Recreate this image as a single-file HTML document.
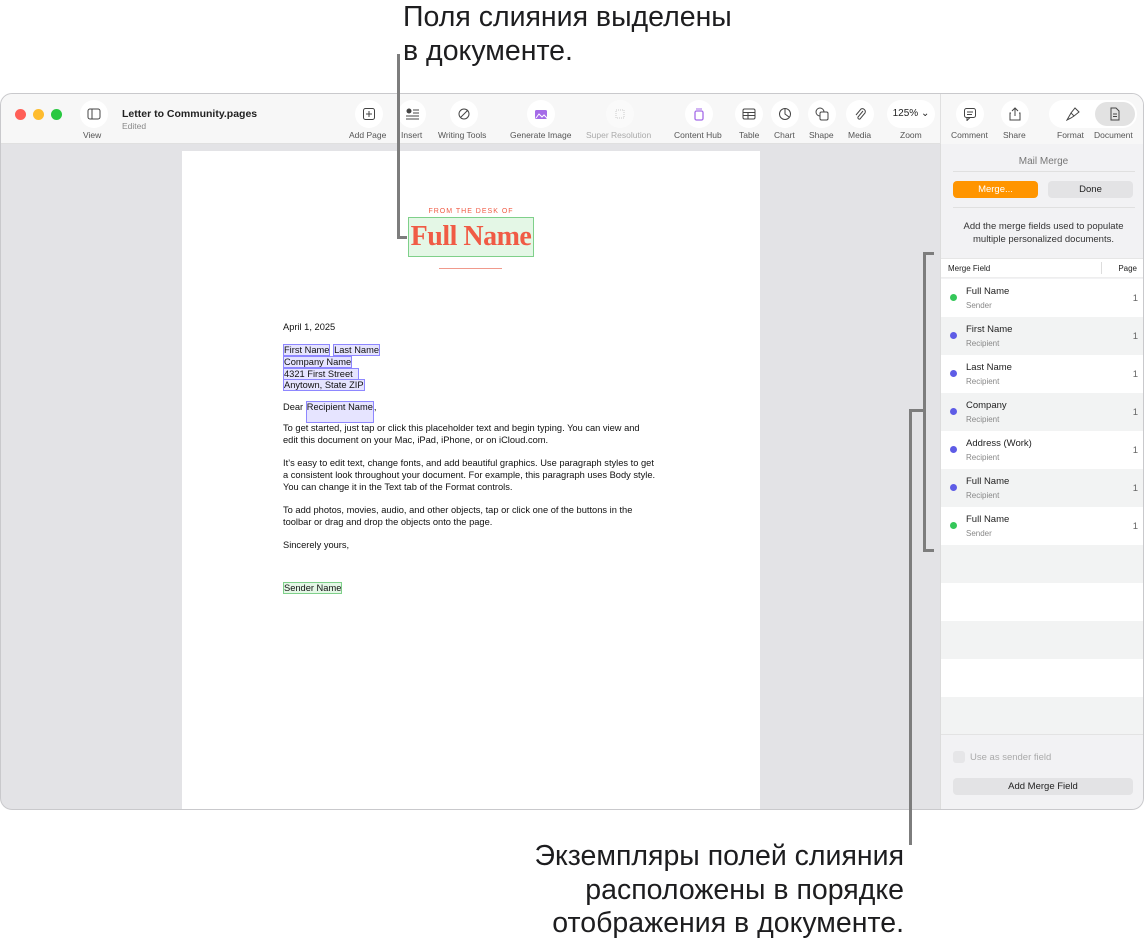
<!DOCTYPE html><html><head><meta charset="utf-8"><style>
*{margin:0;padding:0;box-sizing:border-box}
body{width:1144px;height:950px;background:#fff;font-family:"Liberation Sans",sans-serif;position:relative;overflow:hidden}
.abs{position:absolute}
.call{font-size:28.5px;color:#1d1d1f;line-height:33.5px}
.win{left:0;top:93px;width:1144px;height:717px;border:1px solid #c9c9cc;border-radius:12px;overflow:hidden;background:#e3e3e6}
.tb{left:0;top:0;width:1144px;height:50px;background:#f7f7f7;border-bottom:1px solid #e0e0e0}
.lbl{font-size:8.5px;color:#555;text-align:center;position:absolute;top:36px;white-space:nowrap}
.ic{position:absolute;top:6px;width:28px;height:28px;border-radius:14px;background:#fff}
.ic svg{position:absolute;left:7px;top:7px}
.page{left:181px;top:57px;width:578px;height:660px;background:#fff}
.t{font-size:9.3px;color:#111;line-height:11.8px;position:absolute;white-space:nowrap}
.mf{background:#e6e4ff;border:1px solid #8e87ff}
.side{left:939px;top:50px;width:205px;height:667px;background:#f2f2f4;border-left:1px solid #dcdcdc}
.row{position:absolute;left:0;width:205px;height:38px}
.dot{position:absolute;left:9px;top:15px;width:7px;height:7px;border-radius:4px}
.rn{position:absolute;left:25px;top:7px;font-size:9.5px;color:#222}
.rs{position:absolute;left:25px;top:22px;font-size:8px;color:#888}
.rp{position:absolute;right:8px;top:14px;font-size:9.5px;color:#666}
.ln{position:absolute;background:#7d7d7d}
</style></head><body>
<div class="abs call" style="left:403px;top:1px">Поля слияния выделены<br>в документе.</div>
<div class="abs call" style="right:240px;top:840px;text-align:right">Экземпляры полей слияния<br>расположены в порядке<br>отображения в документе.</div>

<div class="abs win">
 <div class="abs tb">
  <div class="abs" style="left:14px;top:15px;width:11px;height:11px;border-radius:6px;background:#ff5f57"></div>
  <div class="abs" style="left:32px;top:15px;width:11px;height:11px;border-radius:6px;background:#febc2e"></div>
  <div class="abs" style="left:50px;top:15px;width:11px;height:11px;border-radius:6px;background:#28c840"></div>
  <div class="ic" style="left:79px"><svg width="14" height="14"><rect x="1" y="2" width="12" height="10" rx="2" fill="none" stroke="#444"/><line x1="5" y1="2" x2="5" y2="12" stroke="#444"/></svg></div>
  <div class="lbl" style="left:82px">View</div>
  <div class="abs" style="left:121px;top:14px;font-size:10.5px;font-weight:bold;color:#222">Letter to Community.pages</div>
  <div class="abs" style="left:121px;top:27px;font-size:8.5px;color:#888">Edited</div>
  <div class="ic" style="left:354px"><svg width="14" height="14"><rect x="1.5" y="1.5" width="11" height="11" rx="2" fill="none" stroke="#444"/><path d="M7 4v6M4 7h6" stroke="#444"/></svg></div>
  <div class="lbl" style="left:348px">Add Page</div>
  <div class="ic" style="left:397px"><svg width="14" height="14"><circle cx="4" cy="4" r="2.5" fill="#444"/><path d="M8 3h6M8 6h6M1 9h13M1 12h13" stroke="#444"/></svg></div>
  <div class="lbl" style="left:400px">Insert</div>
  <div class="ic" style="left:449px"><svg width="14" height="14"><circle cx="7" cy="7" r="5" fill="none" stroke="#444"/><path d="M4 10l7-7" stroke="#444"/></svg></div>
  <div class="lbl" style="left:437px">Writing Tools</div>
  <div class="ic" style="left:526px"><svg width="14" height="14"><rect x="1" y="3" width="12" height="9" rx="1.5" fill="#a56be8"/><path d="M2 11l3-4 3 3 2-2 3 3" stroke="#fff" fill="none"/></svg></div>
  <div class="lbl" style="left:509px">Generate Image</div>
  <div class="ic" style="left:605px;background:#fafafa"><svg width="14" height="14"><rect x="3" y="3" width="8" height="8" fill="none" stroke="#ccc" stroke-dasharray="1 1"/></svg></div>
  <div class="lbl" style="left:585px;color:#aaa">Super Resolution</div>
  <div class="ic" style="left:684px"><svg width="14" height="14"><rect x="3" y="4" width="8" height="9" rx="1.5" fill="none" stroke="#a56be8" stroke-width="1.3"/><path d="M4 2h6" stroke="#a56be8"/></svg></div>
  <div class="lbl" style="left:673px">Content Hub</div>
  <div class="ic" style="left:734px"><svg width="14" height="14"><rect x="1" y="2" width="12" height="10" rx="1.5" fill="none" stroke="#444"/><path d="M1 5.5h12M1 8.5h12M6 5.5v6.5" stroke="#444"/></svg></div>
  <div class="lbl" style="left:738px">Table</div>
  <div class="ic" style="left:770px"><svg width="14" height="14"><circle cx="7" cy="7" r="5.5" fill="none" stroke="#444"/><path d="M7 1.5V7l4 3" stroke="#444" fill="none"/></svg></div>
  <div class="lbl" style="left:773px">Chart</div>
  <div class="ic" style="left:807px"><svg width="14" height="14"><circle cx="5" cy="5" r="4" fill="none" stroke="#444"/><rect x="5" y="5" width="8" height="8" rx="1.5" fill="#fff" stroke="#444"/></svg></div>
  <div class="lbl" style="left:808px">Shape</div>
  <div class="ic" style="left:845px"><svg width="14" height="14"><path d="M10 4L5 10a1.5 1.5 0 0 0 2 2l5-6a3 3 0 0 0-4-4L3 8" stroke="#444" fill="none"/></svg></div>
  <div class="lbl" style="left:847px">Media</div>
  <div class="abs" style="left:886px;top:6px;width:48px;height:28px;border-radius:14px;background:#fff;font-size:10px;color:#222;text-align:center;line-height:28px">125% ⌄</div>
  <div class="lbl" style="left:899px">Zoom</div>
  <div class="abs" style="left:939px;top:0;width:205px;height:50px;background:#f7f7f7;border-left:1px solid #e0e0e0"></div>
  <div class="ic" style="left:955px"><svg width="14" height="14"><rect x="1.5" y="1.5" width="11" height="9" rx="2" fill="none" stroke="#444"/><path d="M4 5h6M4 7.5h5M4 10.5v3l3-3" stroke="#444" fill="none"/></svg></div>
  <div class="lbl" style="left:950px">Comment</div>
  <div class="ic" style="left:1000px"><svg width="14" height="14"><path d="M7 1v8M4 4l3-3 3 3M3 6H2v7h10V6h-1" stroke="#444" fill="none"/></svg></div>
  <div class="lbl" style="left:1002px">Share</div>
  <div class="abs" style="left:1048px;top:6px;width:88px;height:28px;border-radius:14px;background:#fff"></div>
  <div class="abs" style="left:1094px;top:8px;width:40px;height:24px;border-radius:12px;background:#e2e2e2"></div>
  <svg class="abs" style="left:1065px;top:13px" width="14" height="14"><path d="M9 1l4 4-5 4-3-3zM5 6L1 13l4-2 3-2" stroke="#444" fill="none"/></svg>
  <svg class="abs" style="left:1107px;top:13px" width="14" height="14"><path d="M3 1h5l3 3v9H3z M5 7h4M5 9.5h4" stroke="#444" fill="none"/></svg>
  <div class="lbl" style="left:1056px">Format</div>
  <div class="lbl" style="left:1093px">Document</div>
 </div>

 <div class="abs page">
  <div class="abs" style="left:0;width:578px;top:57px;text-align:center;font-size:7px;letter-spacing:1px;color:#f05b45">FROM THE DESK OF</div>
  <div class="abs" style="left:226px;top:66px;width:126px;height:40px;background:#e4f7e6;border:1px solid #7fd08a;font-family:'Liberation Serif',serif;font-weight:bold;font-size:28px;color:#f05b45;text-align:center;line-height:38px;letter-spacing:-0.5px">Full Name</div>
  <div class="abs" style="left:257px;top:117px;width:63px;height:1px;background:#f09a8c"></div>
  <div class="t" style="left:101px;top:171px">April 1, 2025</div>
  <div class="t" style="left:101px;top:194px"><span class="mf">First Name</span> <span class="mf">Last Name</span><br><span class="mf">Company Name</span><br><span class="mf">4321 First Street&nbsp;&nbsp;</span><br><span class="mf">Anytown, State ZIP</span></div>
  <div class="t" style="left:101px;top:251px">Dear <span class="mf" style="padding-bottom:10px">Recipient Name</span>,</div>
  <div class="t" style="left:101px;top:272px">To get started, just tap or click this placeholder text and begin typing. You can view and<br>edit this document on your Mac, iPad, iPhone, or on iCloud.com.</div>
  <div class="t" style="left:101px;top:307px">It’s easy to edit text, change fonts, and add beautiful graphics. Use paragraph styles to get<br>a consistent look throughout your document. For example, this paragraph uses Body style.<br>You can change it in the Text tab of the Format controls.</div>
  <div class="t" style="left:101px;top:354px">To add photos, movies, audio, and other objects, tap or click one of the buttons in the<br>toolbar or drag and drop the objects onto the page.</div>
  <div class="t" style="left:101px;top:389px">Sincerely yours,</div>
  <div class="t" style="left:101px;top:432px"><span style="background:#e4f7e6;border:1px solid #7fd08a">Sender Name</span></div>
 </div>

 <div class="abs side">
  <div class="abs" style="left:0;width:205px;top:12px;text-align:center;font-size:10px;color:#777">Mail Merge</div>
  <div class="abs" style="left:12px;top:27px;width:182px;height:1px;background:#e0e0e0"></div>
  <div class="abs" style="left:12px;top:37px;width:85px;height:17px;border-radius:4px;background:#ff9500;color:#fff;font-size:9.5px;text-align:center;line-height:17px">Merge...</div>
  <div class="abs" style="left:107px;top:37px;width:85px;height:17px;border-radius:4px;background:#e3e3e5;color:#222;font-size:9.5px;text-align:center;line-height:17px">Done</div>
  <div class="abs" style="left:12px;top:63px;width:182px;height:1px;background:#e0e0e0"></div>
  <div class="abs" style="left:0;width:205px;top:77px;text-align:center;font-size:9.5px;color:#333;line-height:12.5px">Add the merge fields used to populate<br>multiple personalized documents.</div>
  <div class="abs" style="left:0;top:114px;width:205px;height:20px;background:#fff;border-top:1px solid #e6e6e6;border-bottom:1px solid #eee"></div>
  <div class="abs" style="left:7px;top:120px;font-size:8px;color:#222">Merge Field</div>
  <div class="abs" style="left:160px;top:118px;width:1px;height:12px;background:#ddd"></div>
  <div class="abs" style="right:8px;top:120px;font-size:8px;color:#222">Page</div>
  <div class="row" style="top:135px;background:#fff"><div class="dot" style="background:#34c759"></div><div class="rn">Full Name</div><div class="rs">Sender</div><div class="rp">1</div></div>
  <div class="row" style="top:173px;background:#f2f3f3"><div class="dot" style="background:#5e5ce6"></div><div class="rn">First Name</div><div class="rs">Recipient</div><div class="rp">1</div></div>
  <div class="row" style="top:211px;background:#fff"><div class="dot" style="background:#5e5ce6"></div><div class="rn">Last Name</div><div class="rs">Recipient</div><div class="rp">1</div></div>
  <div class="row" style="top:249px;background:#f2f3f3"><div class="dot" style="background:#5e5ce6"></div><div class="rn">Company</div><div class="rs">Recipient</div><div class="rp">1</div></div>
  <div class="row" style="top:287px;background:#fff"><div class="dot" style="background:#5e5ce6"></div><div class="rn">Address (Work)</div><div class="rs">Recipient</div><div class="rp">1</div></div>
  <div class="row" style="top:325px;background:#f2f3f3"><div class="dot" style="background:#5e5ce6"></div><div class="rn">Full Name</div><div class="rs">Recipient</div><div class="rp">1</div></div>
  <div class="row" style="top:363px;background:#fff"><div class="dot" style="background:#34c759"></div><div class="rn">Full Name</div><div class="rs">Sender</div><div class="rp">1</div></div>
  <div class="row" style="top:401px;background:#f2f3f3"></div>
  <div class="row" style="top:439px;background:#fff"></div>
  <div class="row" style="top:477px;background:#f2f3f3"></div>
  <div class="row" style="top:515px;background:#fff"></div>
  <div class="row" style="top:553px;background:#f2f3f3;border-bottom:1px solid #e3e3e3"></div>
  <div class="abs" style="left:12px;top:607px;width:12px;height:12px;border-radius:3px;background:#e6e6e8"></div>
  <div class="abs" style="left:29px;top:608px;font-size:9.5px;color:#aaa">Use as sender field</div>
  <div class="abs" style="left:12px;top:634px;width:180px;height:17px;border-radius:4px;background:#e3e3e5;color:#222;font-size:9.5px;text-align:center;line-height:17px">Add Merge Field</div>
 </div>
</div>

<div class="ln" style="left:397px;top:54px;width:3px;height:185px"></div>
<div class="ln" style="left:397px;top:236px;width:10px;height:3px"></div>
<div class="ln" style="left:923px;top:252px;width:3px;height:300px"></div>
<div class="ln" style="left:923px;top:252px;width:11px;height:3px"></div>
<div class="ln" style="left:923px;top:549px;width:11px;height:3px"></div>
<div class="ln" style="left:909px;top:409px;width:16px;height:3px"></div>
<div class="ln" style="left:909px;top:409px;width:3px;height:436px"></div>
</body></html>
